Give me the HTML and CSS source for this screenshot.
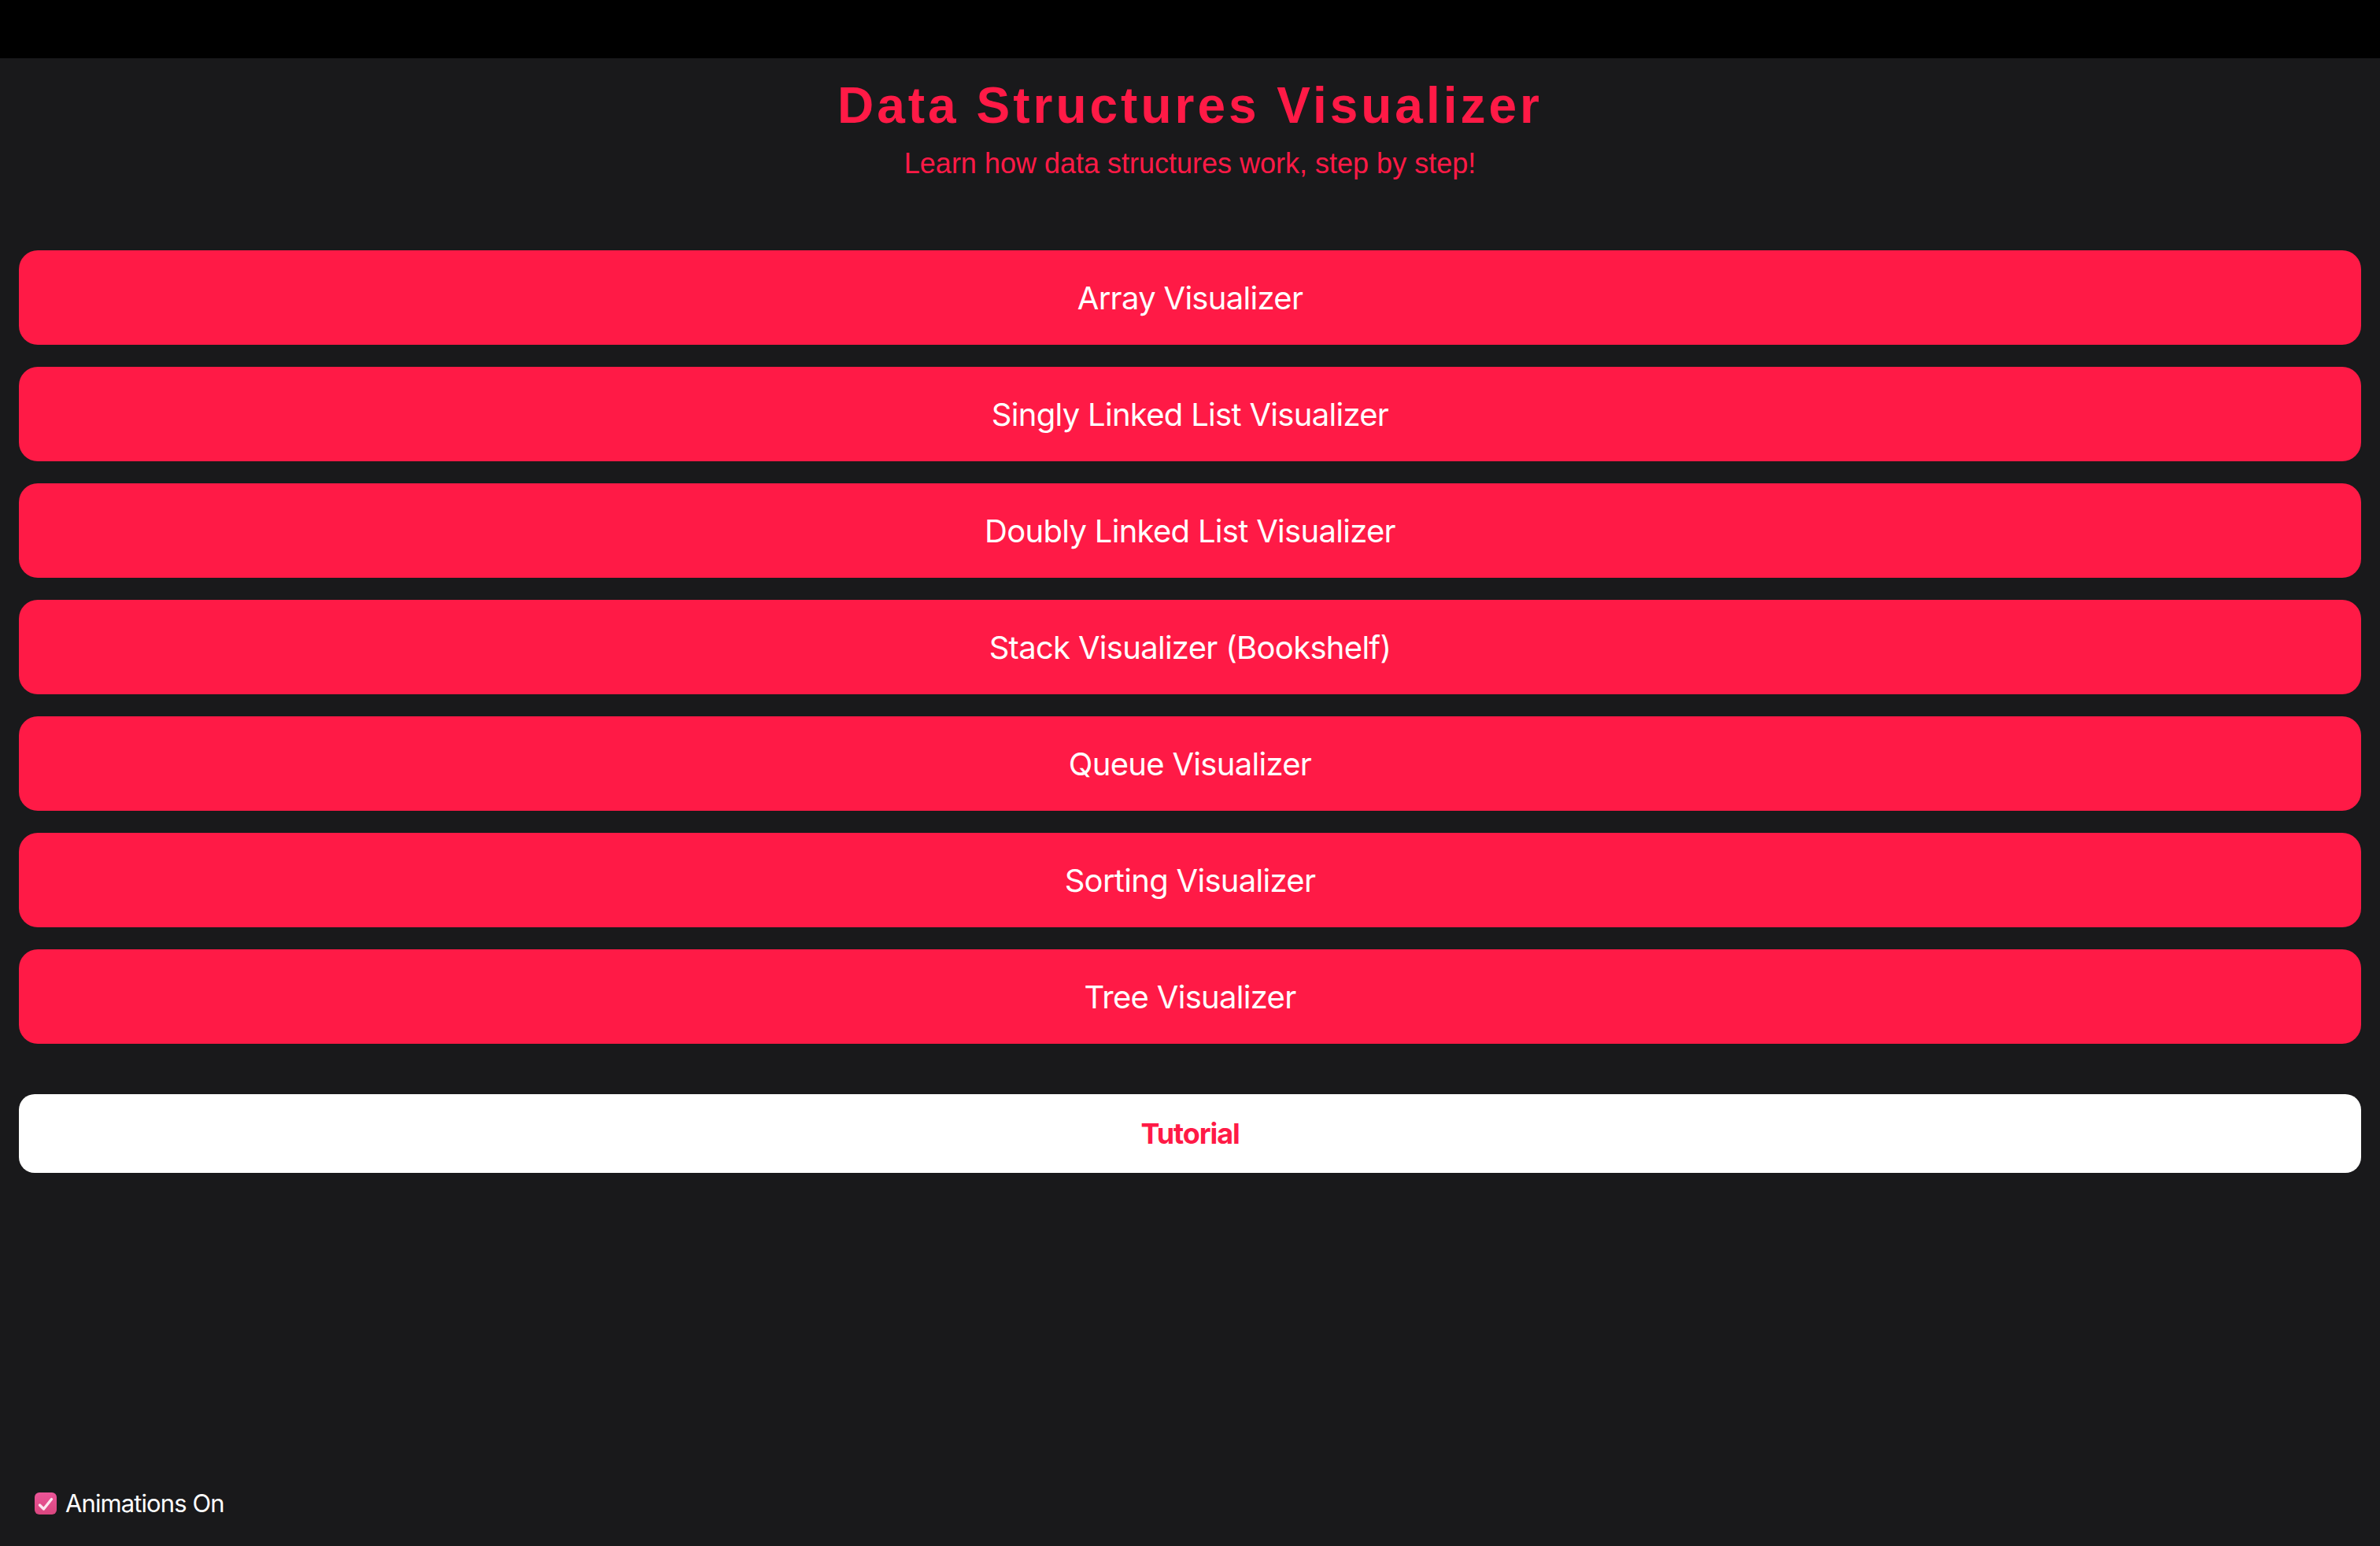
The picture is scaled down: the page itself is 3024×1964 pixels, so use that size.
FILE: index.html
```html
<!DOCTYPE html>
<html lang="en">
<head>
<meta charset="utf-8">
<title>Data Structures Visualizer</title>
<link rel="stylesheet" href="styles.css">
</head>
<body>
<div class="topbar"></div>
<header class="header">
  <h1 class="title">Data Structures Visualizer</h1>
  <p class="subtitle">Learn how data structures work, step by step!</p>
</header>
<nav class="menu">
  <button class="menu-btn">Array Visualizer</button>
  <button class="menu-btn">Singly Linked List Visualizer</button>
  <button class="menu-btn">Doubly Linked List Visualizer</button>
  <button class="menu-btn">Stack Visualizer (Bookshelf)</button>
  <button class="menu-btn">Queue Visualizer</button>
  <button class="menu-btn">Sorting Visualizer</button>
  <button class="menu-btn">Tree Visualizer</button>
</nav>
<div class="tutorial-wrap">
  <button class="tutorial-btn">Tutorial</button>
</div>
<label class="toggle">
  <span class="check"><svg viewBox="0 0 28 28" width="28" height="28"><path d="M6.5 16 L11.5 21 L21.5 8.5" fill="none" stroke="#fce4ef" stroke-width="3.4" stroke-linecap="round" stroke-linejoin="round"/></svg></span>
  <span class="toggle-text">Animations On</span>
</label>
</body>
</html>
```

FILE: styles.css
```css
html, body {
  margin: 0;
  padding: 0;
}
body {
  background: #19191b;
  min-height: 100vh;
  display: flex;
  flex-direction: column;
  font-family: Inter, "Noto Sans", sans-serif;
}
.topbar {
  height: 74px;
  background: #000;
  flex-shrink: 0;
}
.header {
  text-align: center;
  padding-top: 23px;
}
.title {
  margin: 0;
  font-family: "Liberation Sans", Arial, sans-serif;
  font-weight: bold;
  font-size: 64px;
  line-height: 74px;
  letter-spacing: 4px;
  color: #ff1a46;
}
.subtitle {
  margin: 16px 0 0;
  font-family: "Liberation Sans", Arial, sans-serif;
  font-size: 36px;
  line-height: 42px;
  color: #ff1a46;
}
.menu {
  display: flex;
  flex-direction: column;
  gap: 28px;
  padding: 0 24px;
  margin-top: 89px;
}
.menu-btn {
  height: 120px;
  border: none;
  border-radius: 24px;
  background: #ff1a46;
  color: #fff;
  font-family: Inter, "Noto Sans", sans-serif;
  font-size: 40px;
  font-weight: 400;
  letter-spacing: -0.7px;
  padding: 0;
  cursor: pointer;
}
.tutorial-wrap {
  padding: 0 24px;
  margin-top: 64px;
  display: flex;
  flex-direction: column;
}
.tutorial-btn {
  height: 100px;
  border: none;
  border-radius: 20px;
  background: #fff;
  color: #ff1a46;
  font-family: Inter, "Noto Sans", sans-serif;
  font-size: 36px;
  font-weight: 700;
  letter-spacing: -1.1px;
  padding: 0;
  cursor: pointer;
}
.toggle {
  margin-top: auto;
  margin-bottom: 34px;
  padding-left: 44px;
  height: 40px;
  display: flex;
  align-items: center;
  gap: 11px;
}
.check {
  width: 28px;
  height: 28px;
  border-radius: 6px;
  background: linear-gradient(#ec5598, #d9467f);
  display: flex;
}
.toggle-text {
  color: #fff;
  font-size: 31px;
  line-height: 40px;
  letter-spacing: -0.9px;
}
```
